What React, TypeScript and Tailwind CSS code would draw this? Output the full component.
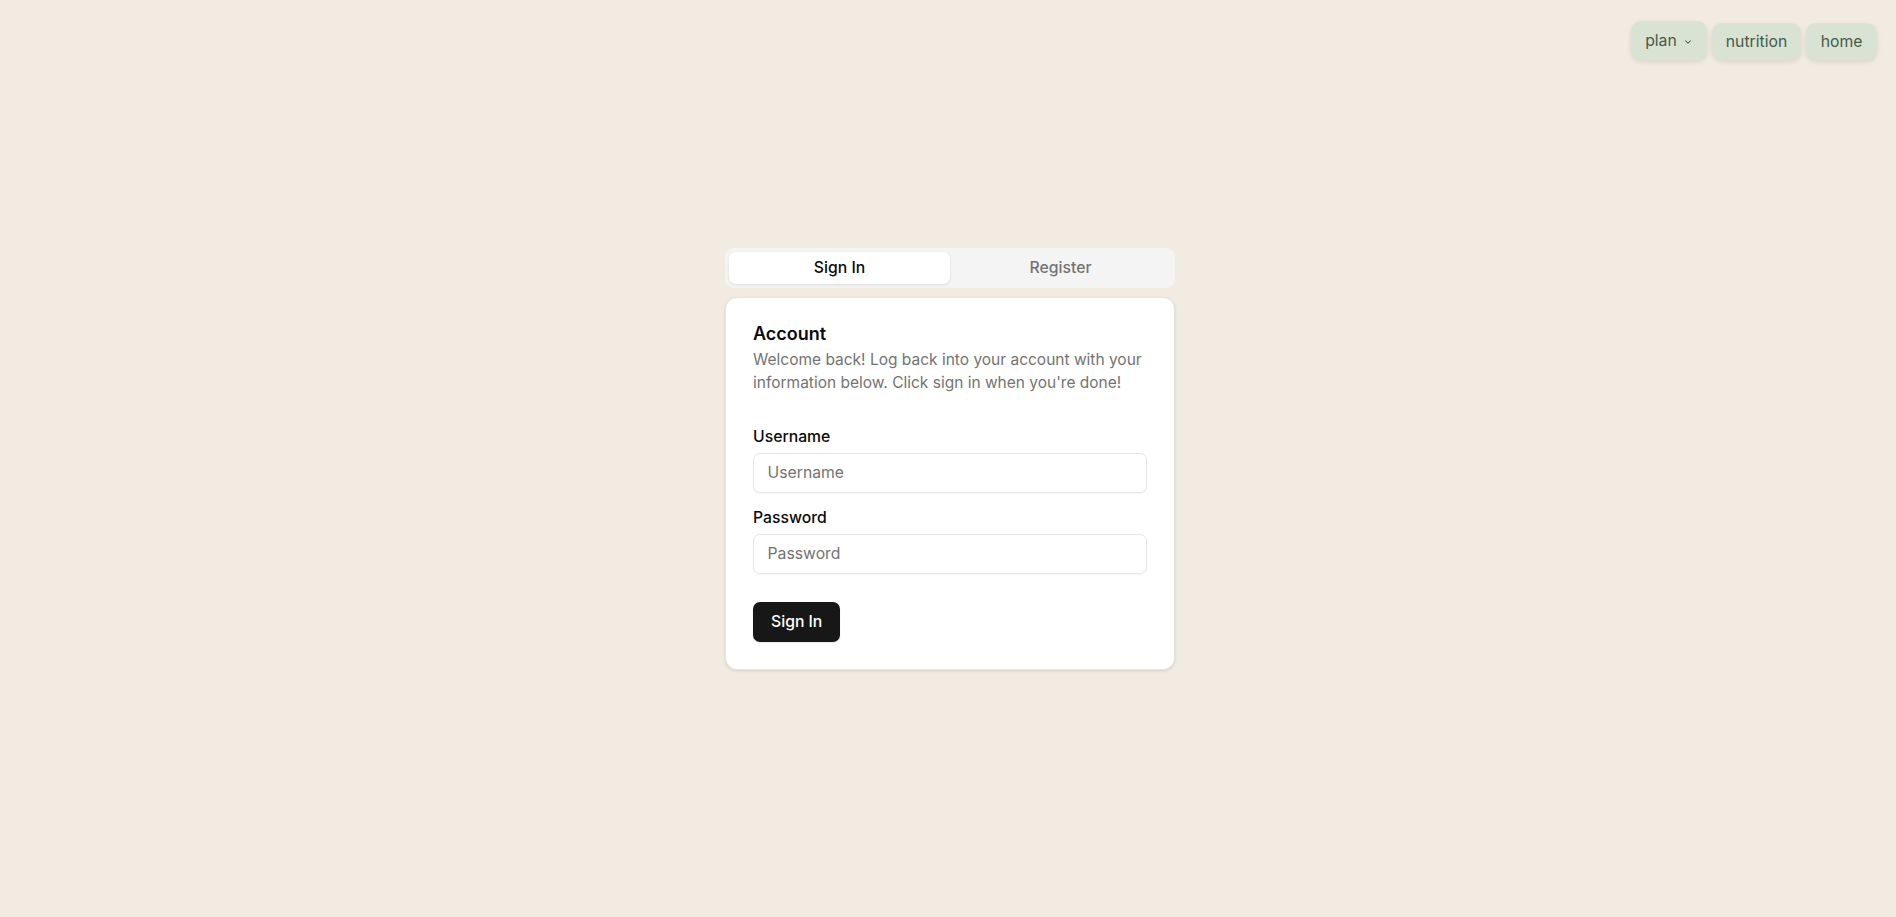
import React from "react";

function Chevron() {
  return (
    <svg width="10" height="10" viewBox="0 0 24 24" fill="none" stroke="currentColor" strokeWidth="2.5" strokeLinecap="round" strokeLinejoin="round" className="ml-[6px] mt-[2px]">
      <path d="m6 9 6 6 6-6" />
    </svg>
  );
}

export default function App() {
  return (
    <div
      className="relative min-h-screen w-full bg-[#f2ebe1] flex items-center justify-center pl-[4px]"
      style={{ fontFamily: "Inter, 'Noto Sans', sans-serif" }}
    >
      <nav className="absolute top-[21px] right-[19px] flex items-start gap-[5px]">
        <button className="flex items-center h-[39px] pl-[14px] pr-[14px] rounded-[10px] bg-[#d9e3d3] text-[#455a4b] text-[15.75px] shadow-[0_2px_5px_rgba(0,0,0,0.1)]">
          plan
          <Chevron />
        </button>
        <button className="mt-[2px] h-[37px] px-[14px] rounded-[10px] bg-[#d9e3d3] text-[#455a4b] text-[15.75px] shadow-[0_2px_5px_rgba(0,0,0,0.1)]">
          nutrition
        </button>
        <button className="mt-[2px] h-[37px] px-[14.5px] rounded-[10px] bg-[#d9e3d3] text-[#455a4b] text-[15.75px] shadow-[0_2px_5px_rgba(0,0,0,0.1)]">
          home
        </button>
      </nav>

      <div className="w-[450px] flex flex-col">
        <div className="grid grid-cols-2 h-[40px] p-[4px] rounded-[9px] bg-[#f4f4f4]">
          <button className="h-[32px] rounded-[7px] bg-white text-[#0a0a0a] text-[15.75px] font-medium shadow-[0_1px_3px_rgba(0,0,0,0.1)]">
            Sign In
          </button>
          <button className="h-[32px] rounded-[7px] text-[#737373] text-[15.75px] font-medium">
            Register
          </button>
        </div>

        <div className="mt-[9px] bg-white border border-[#e5e5e5] rounded-[12px] shadow-[0_1px_3px_rgba(0,0,0,0.12)] p-[27px]">
          <h3 className="text-[18px] leading-none font-semibold text-[#0a0a0a]">Account</h3>
          <p className="mt-[6.5px] text-[15.5px] leading-[22.5px] text-[#737373]">
            Welcome back! Log back into your account with your information below. Click sign in when you're done!
          </p>

          <div className="mt-[35px] flex flex-col">
            <label className="text-[15.75px] leading-none font-medium text-[#0a0a0a]">Username</label>
            <input
              placeholder="Username"
              className="mt-[8px] h-[40px] w-full rounded-[7px] border border-[#e5e5e5] px-[13.5px] text-[15.75px] text-[#0a0a0a] placeholder:text-[#737373] shadow-[0_1px_2px_rgba(0,0,0,0.04)] outline-none"
            />
            <label className="mt-[17px] text-[15.75px] leading-none font-medium text-[#0a0a0a]">Password</label>
            <input
              type="password"
              placeholder="Password"
              className="mt-[8px] h-[40px] w-full rounded-[7px] border border-[#e5e5e5] px-[13.5px] text-[15.75px] text-[#0a0a0a] placeholder:text-[#737373] shadow-[0_1px_2px_rgba(0,0,0,0.04)] outline-none"
            />
          </div>

          <button className="mt-[28px] h-[40px] px-[18px] rounded-[7px] bg-[#171717] text-white text-[15.75px] font-medium shadow-[0_1px_2px_rgba(0,0,0,0.1)]">
            Sign In
          </button>
        </div>
      </div>
    </div>
  );
}
